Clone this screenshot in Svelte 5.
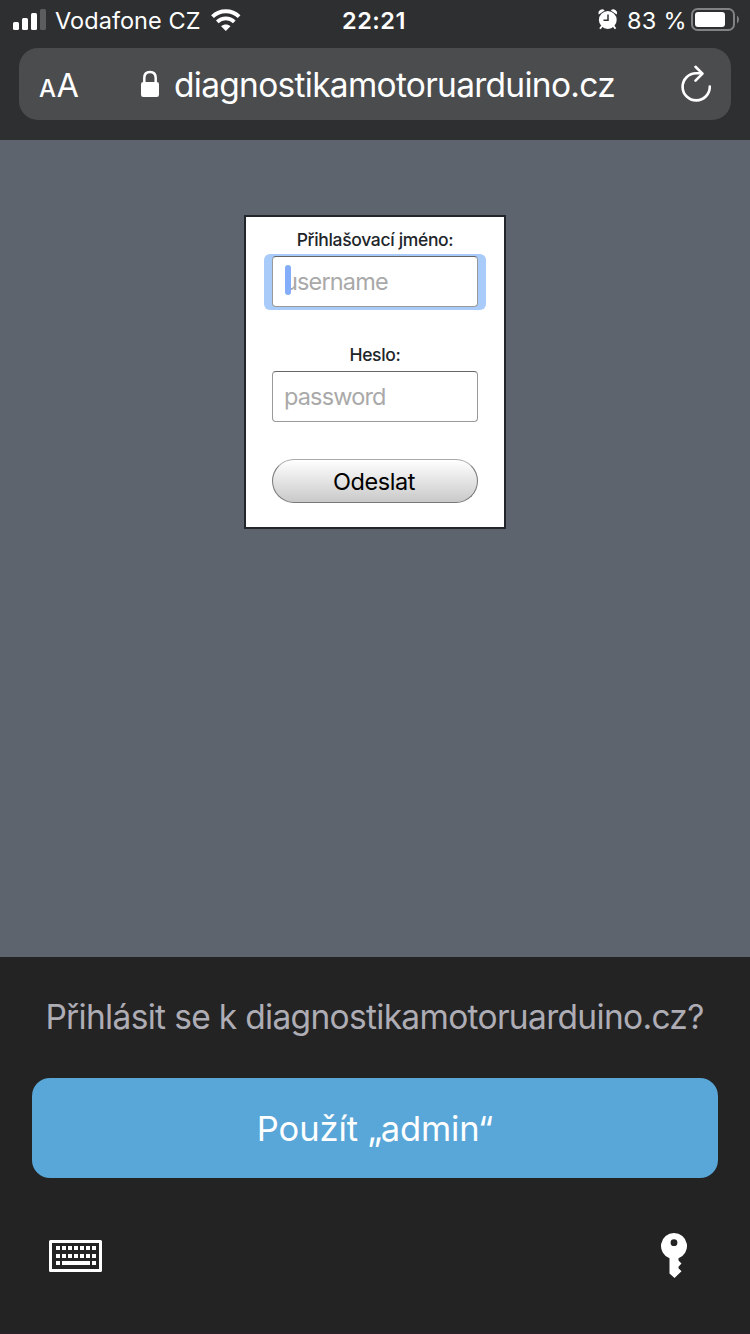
<script>
  const keyRows = [1246, 1254];
  const keyCols = [0, 1, 2, 3, 4, 5, 6];
  let username = $state('');
  let password = $state('');
</script>

<div class="phone">
  <header>
    <div class="status">
      <svg class="signal" width="34" height="22" viewBox="0 0 34 22">
        <rect x="0" y="13" width="6" height="8" rx="1.5" fill="#fff" />
        <rect x="9" y="9" width="6" height="12" rx="1.5" fill="#fff" />
        <rect x="18" y="4" width="6" height="17" rx="1.5" fill="#fff" />
        <rect x="27" y="0" width="6" height="21" rx="1.5" fill="#5c5d5f" />
      </svg>
      <span class="carrier">Vodafone CZ</span>
      <svg class="wifi" width="30" height="23" viewBox="0 0 30 23">
        <path d="M1.5 7.600C9 .500 20.600.500 28.100 7.600" fill="none" stroke="#fff" stroke-width="4" />
        <path d="M6.3 12.900C11.1 8.300 18.5 8.300 23.3 12.900" fill="none" stroke="#fff" stroke-width="3.8" />
        <path d="M10.1 17.2C12.800 14.8 16.800 14.8 19.500 17.2L14.800 22Z" fill="#fff" />
      </svg>
      <span class="time">22:21</span>
      <svg class="alarm" width="20" height="21" viewBox="0 0 20 21">
        <path d="M4 17L2 19.700M15.500 17L17.500 19.700" stroke="#fff" stroke-width="1.900" />
        <path d="M.8 5.400A3.600 3.600 0 0 1 6.700 1.500ZM18.700 5.400A3.600 3.600 0 0 0 12.800 1.500Z" fill="#fff" />
        <circle cx="9.800" cy="11" r="8.900" fill="#fff" />
        <path d="M10 5.500V11.300H5.500" fill="none" stroke="#2e2f31" stroke-width="1.500" />
      </svg>
      <span class="percent">83 %</span>
      <svg class="battery" width="49" height="24" viewBox="0 0 49 24">
        <rect x="1" y="1" width="42" height="21" rx="5.500" fill="none" stroke="#818283" stroke-width="2" />
        <rect x="4" y="4" width="30" height="15" rx="3" fill="#fff" />
        <path d="M46 7.500Q48 9 48 11.500T46 15.500Z" fill="#818283" />
      </svg>
    </div>

    <div class="address">
      <div class="reader"><span class="small">A</span><span class="large">A</span></div>
      <svg class="lock" width="20" height="28" viewBox="0 0 20 28">
        <path d="M4.300 13V8Q4.300 2 10 2T15.700 8V13" fill="none" stroke="#fff" stroke-width="2.500" />
        <rect x="1" y="12" width="18" height="15" rx="2.200" fill="#fff" />
      </svg>
      <span class="url">diagnostikamotoruarduino.cz</span>
      <svg class="reload" width="32" height="38" viewBox="0 0 32 38">
        <path d="M29.800 21.500A13.600 13.600 0 1 1 16.200 8.200H21.500" fill="none" stroke="#fff" stroke-width="2.600" stroke-linecap="round" />
        <path d="M15.500 1.800L22.500 8.600L15.500 15.600" fill="none" stroke="#fff" stroke-width="2.600" stroke-linecap="round" stroke-linejoin="round" />
      </svg>
    </div>
  </header>

  <main>
    <form onsubmit={(e) => e.preventDefault()}>
      <label for="username">Přihlašovací jméno:</label>
      <div class="field focused">
        <input id="username" placeholder="username" bind:value={username} />
        <i class="caret"></i>
      </div>
      <label class="second" for="password">Heslo:</label>
      <div class="field">
        <input id="password" type="password" placeholder="password" bind:value={password} />
      </div>
      <button class="send">Odeslat</button>
    </form>
  </main>

  <footer>
    <p>Přihlásit se k diagnostikamotoruarduino.cz?</p>
    <button class="use"><span>Použít „admin“</span></button>
    <div class="tools">
      <svg width="54" height="34" viewBox="48 1239 54 34">
        <rect x="50.500" y="1241.500" width="50" height="29" fill="none" stroke="#fff" stroke-width="3" stroke-linejoin="round" />
        {#each keyRows as y}
          {#each keyCols as c}
            <rect x={56 + c * 6} {y} width="4" height="4" fill="#fff" />
          {/each}
        {/each}
        <rect x="56" y="1261" width="4" height="4" fill="#fff" />
        <rect x="62" y="1261" width="28" height="4" fill="#fff" />
        <rect x="92" y="1261" width="4" height="4" fill="#fff" />
      </svg>
      <svg width="28" height="48" viewBox="0 0 28 48">
        <path fill="#fff" fill-rule="evenodd" d="M14 1A13 13 0 0 1 18.500 26.200V28.500L21.500 31.500L18.500 34.700V36.200L21.500 39.200L14.500 46L9.500 41.500V26.200A13 13 0 0 1 14 1ZM14 7.300A3.400 3.400 0 1 0 14 14.100A3.400 3.400 0 1 0 14 7.300Z" />
      </svg>
    </div>
  </footer>
</div>

<style>
  :global(body) {
    margin: 0;
    background: #232323;
  }
  * {
    box-sizing: border-box;
  }
  .phone {
    width: 750px;
    height: 1334px;
    display: flex;
    flex-direction: column;
    overflow: hidden;
    font-family: Inter, "Liberation Sans", sans-serif;
    color: #fff;
    background: #5e646e;
  }
  svg {
    display: block;
    flex: none;
  }
  span {
    white-space: nowrap;
  }
  header {
    height: 140px;
    flex: none;
    padding: 0 19px;
    background: #2e2f31;
  }
  .status {
    height: 48px;
    margin: 0 -19px;
    padding-left: 13px;
    display: flex;
    align-items: flex-start;
    font-size: 23.500px;
    line-height: 28px;
  }
  .signal {
    margin-top: 9px;
  }
  .carrier {
    width: 164px;
    padding: 7px 0 0 8px;
    letter-spacing: 0.050px;
  }
  .wifi {
    margin-top: 9px;
  }
  .time {
    width: 357px;
    padding: 7px 0 0 101px;
    font-weight: 600;
    letter-spacing: 0.500px;
  }
  .alarm {
    margin-top: 9px;
  }
  .percent {
    width: 73px;
    padding: 7px 0 0 9px;
    letter-spacing: 0.300px;
  }
  .battery {
    margin-top: 8px;
  }
  .address {
    height: 72px;
    display: flex;
    align-items: flex-start;
    background: #4b4c4e;
    border-radius: 19px;
  }
  .reader {
    width: 121px;
    padding: 17px 0 0 20px;
    line-height: 42px;
    white-space: nowrap;
  }
  .small {
    font-size: 24px;
    font-weight: 500;
  }
  .large {
    font-size: 32.500px;
    margin-left: 0.500px;
  }
  .lock {
    margin-top: 22px;
  }
  .url {
    width: 520px;
    padding: 16px 0 0 14px;
    font-size: 33.500px;
    line-height: 42px;
    letter-spacing: -0.720px;
  }
  .reload {
    margin-top: 17px;
  }
  main {
    height: 817px;
    flex: none;
    padding-top: 75px;
  }
  form {
    width: 262px;
    height: 314px;
    margin: 0 auto;
    padding: 13px 18px 0;
    display: flex;
    flex-direction: column;
    align-items: center;
    background: #fff;
    border: 2px solid #22252a;
  }
  label {
    height: 24px;
    font-size: 17.500px;
    line-height: 20px;
    font-weight: 500;
    letter-spacing: -0.330px;
    color: #212529;
    white-space: nowrap;
  }
  .field {
    position: relative;
    flex: none;
    width: 222px;
    height: 56px;
    padding: 2px 8px 3px 8px;
    border-radius: 6px;
  }
  .focused {
    background: #a9cbf9;
  }
  .second {
    margin-top: 35px;
  }
  input {
    display: block;
    width: 206px;
    height: 51px;
    padding: 0 11px;
    border: 1px solid #999;
    border-top-color: #666;
    border-radius: 4px;
    outline: none;
    background: #fff;
    font: 23.500px Inter, sans-serif;
    letter-spacing: -0.850px;
  }
  input::placeholder {
    color: #a9a9a9;
    opacity: 1;
  }
  .caret {
    position: absolute;
    left: 21px;
    top: 11px;
    width: 6px;
    height: 30px;
    border-radius: 3px;
    background: #84adfa;
  }
  button {
    font-family: Inter, sans-serif;
  }
  .send {
    flex: none;
    width: 206px;
    height: 44px;
    margin-top: 34px;
    padding: 0 2px 0 0;
    border: 1px solid #777;
    border-top-color: #aaa;
    border-radius: 22px;
    background: linear-gradient(#fff, #c9c9c9);
    color: #000;
    font-size: 23.500px;
    letter-spacing: -0.400px;
  }
  footer {
    height: 377px;
    padding: 0 32px;
    background: #232323;
    border-bottom: 1px solid #2b2028;
  }
  p {
    margin: 0 0 0 -1px;
    height: 121px;
    padding-top: 39px;
    font-size: 33.500px;
    line-height: 42px;
    letter-spacing: -0.680px;
    text-align: center;
    white-space: nowrap;
    color: #aeadb5;
  }
  .use {
    display: flex;
    align-items: center;
    justify-content: center;
    width: 686px;
    height: 100px;
    border: 0;
    border-radius: 18px;
    background: #59a6d8;
    color: #fff;
    font-size: 34.500px;
    letter-spacing: -0.100px;
  }
  .tools {
    display: flex;
    justify-content: space-between;
    align-items: center;
    padding: 54px 30px 0 16px;
  }
</style>
